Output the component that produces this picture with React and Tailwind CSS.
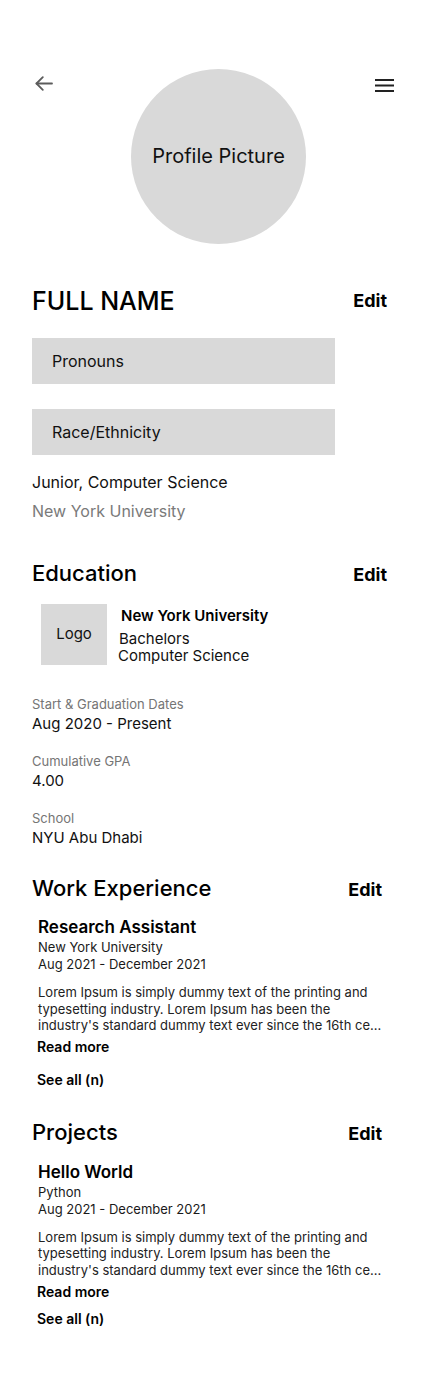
import React from 'react';

const Edit = () => (
  <button className="text-[18px] leading-[24px] font-bold text-black">Edit</button>
);

const SectionHead = ({ title, className = '', pr = 'pr-[43px]' }) => (
  <div className={`flex items-end justify-between ${pr} ${className}`}>
    <h2 className="text-[22px] leading-[28px] font-medium text-black">{title}</h2>
    <Edit />
  </div>
);

const Field = ({ label, value, className = '' }) => (
  <div className={className}>
    <div className="text-[13px] leading-[16px] text-[#757575]">{label}</div>
    <div className="mt-[2px] text-[15px] leading-[20px] text-[#111]">{value}</div>
  </div>
);

const lorem = [
  'Lorem Ipsum is simply dummy text of the printing and',
  'typesetting industry. Lorem Ipsum has been the',
  "industry's standard dummy text ever since the 16th ce...",
];

const Entry = ({ title, sub, dates, gaps }) => (
  <div className="pl-[6px]">
    <h3 className={`${gaps.title} text-[17px] leading-[22px] font-semibold text-black`}>{title}</h3>
    <div className={`${gaps.sub} text-[13px] leading-[17px] text-[#1a1a1a]`}>{sub}</div>
    <div className="text-[13px] leading-[17px] text-[#1a1a1a]">{dates}</div>
    <p className={`${gaps.body} text-[13px] leading-[16.5px] text-[#222]`}>
      {lorem.map((l) => (
        <span key={l} className="block whitespace-nowrap">{l}</span>
      ))}
    </p>
    <div className={`${gaps.read} -ml-[1px] text-[14px] leading-[16px] font-semibold text-black`}>Read more</div>
    <div className={`${gaps.all} -ml-[1px] text-[14px] leading-[16px] font-semibold text-black`}>See all (n)</div>
  </div>
);

export default function App() {
  return (
    <div className="min-h-screen bg-white font-['Inter','Liberation_Sans',sans-serif] text-black">
      {/* top bar + avatar */}
      <div className="flex items-start pt-[69px] pl-[35px] pr-[36px]">
        <div className="w-[96px] pt-[7px]">
          <svg width="18" height="15" viewBox="0 0 18 15" fill="none" stroke="#5c5c5c" strokeWidth="1.8" strokeLinecap="round" strokeLinejoin="round">
            <path d="M17 7.5H1.5" />
            <path d="M7.8 1.2 1.5 7.5l6.3 6.3" />
          </svg>
        </div>
        <div className="w-[175px] h-[175px] rounded-full bg-[#d9d9d9] flex items-center justify-center">
          <span className="text-[20px] leading-[24px] text-[#111] -mt-[2px]">Profile Picture</span>
        </div>
        <div className="flex-1" />
        <div className="pt-[10px]">
          <svg width="19" height="13" viewBox="0 0 19 13" fill="none" stroke="#222" strokeWidth="2">
            <path d="M0 1h19M0 6.5h19M0 12h19" />
          </svg>
        </div>
      </div>

      <div className="pl-[32px]">
        {/* name */}
        <div className="mt-[41px] flex items-center justify-between pr-[43px]">
          <h1 className="text-[25px] leading-[32px] font-medium text-black">FULL NAME</h1>
          <Edit />
        </div>
        <div className="mt-[21px] w-[303px] h-[46px] bg-[#d9d9d9] flex items-center pl-[20px] text-[16px] text-[#111]">
          Pronouns
        </div>
        <div className="mt-[25px] w-[303px] h-[46px] bg-[#d9d9d9] flex items-center pl-[20px] text-[16px] text-[#111]">
          Race/Ethnicity
        </div>
        <div className="mt-[15px] text-[16px] leading-[24px] text-[#111]">Junior, Computer Science</div>
        <div className="mt-[5px] text-[16px] leading-[24px] text-[#7a7a7a]">New York University</div>

        {/* education */}
        <SectionHead title="Education" className="mt-[36px]" />
        <div className="mt-[17px] ml-[9px] flex items-start">
          <div className="w-[66px] h-[61px] bg-[#d9d9d9] flex items-center justify-center text-[15px] text-[#111]">
            Logo
          </div>
          <div className="ml-[14px] pt-[2px]">
            <div className="text-[15px] leading-[20px] font-semibold text-black">New York University</div>
            <div className="mt-[4px] -ml-[2px] text-[15px] leading-[17px] text-[#111]">
              <div>Bachelors</div>
              <div className="-ml-[1px]">Computer Science</div>
            </div>
          </div>
        </div>
        <Field className="mt-[31px]" label="Start & Graduation Dates" value="Aug 2020 - Present" />
        <Field className="mt-[19px]" label="Cumulative GPA" value="4.00" />
        <Field className="mt-[19px]" label="School" value="NYU Abu Dhabi" />

        {/* work */}
        <SectionHead title="Work Experience" className="mt-[26px]" pr="pr-[48px]" />
        <Entry
          title="Research Assistant"
          sub="New York University"
          dates="Aug 2021 - December 2021"
          gaps={{ title: 'mt-[14px]', sub: 'mt-[1px]', body: 'mt-[11px]', read: 'mt-[5px]', all: 'mt-[17px]' }}
        />

        {/* projects */}
        <SectionHead title="Projects" className="mt-[30px]" pr="pr-[48px]" />
        <Entry
          title="Hello World"
          sub="Python"
          dates="Aug 2021 - December 2021"
          gaps={{ title: 'mt-[15px]', sub: 'mt-[1px]', body: 'mt-[11px]', read: 'mt-[6px]', all: 'mt-[11px]' }}
        />
      </div>
    </div>
  );
}
